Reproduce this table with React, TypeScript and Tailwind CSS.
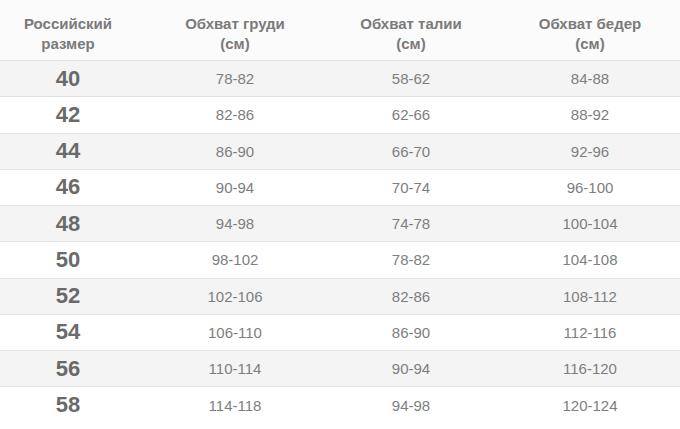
const headers = [
  ["Российский", "размер"],
  ["Обхват груди", "(см)"],
  ["Обхват талии", "(см)"],
  ["Обхват бедер", "(см)"],
];

const rows = [
  ["40", "78-82", "58-62", "84-88"],
  ["42", "82-86", "62-66", "88-92"],
  ["44", "86-90", "66-70", "92-96"],
  ["46", "90-94", "70-74", "96-100"],
  ["48", "94-98", "74-78", "100-104"],
  ["50", "98-102", "78-82", "104-108"],
  ["52", "102-106", "82-86", "108-112"],
  ["54", "106-110", "86-90", "112-116"],
  ["56", "110-114", "90-94", "116-120"],
  ["58", "114-118", "94-98", "120-124"],
];

export default function App() {
  return (
    <div className="w-[680px] h-[429px] overflow-hidden bg-white font-['Liberation_Sans',Arial,sans-serif]">
      <div className="w-[692px]">
        <div className="grid grid-cols-[136px_198px_154px_204px] h-[61px] bg-[#fbfbfb] border-b border-[#e2e2e2] pt-[14px]">
          {headers.map((h, i) => (
            <div
              key={i}
              className="text-center text-[15px] leading-[20px] font-bold text-[#7a7a7a]"
            >
              <div>{h[0]}</div>
              <div>{h[1]}</div>
            </div>
          ))}
        </div>

        {rows.map((r, i) => (
          <div
            key={r[0]}
            className={`grid grid-cols-[136px_198px_154px_204px] h-[36.25px] items-center ${
              i < rows.length - 1 ? "border-b border-[#e2e2e2] shadow-[0_1px_0_#ffffff]" : ""
            } ${i % 2 === 0 ? "bg-[#f4f4f4]" : "bg-white"}`}
          >
            <div className="text-center text-[22px] font-bold text-[#6a6a6a] leading-none">
              {r[0]}
            </div>
            <div className="text-center text-[15px] text-[#7e7e7e] leading-none">
              {r[1]}
            </div>
            <div className="text-center text-[15px] text-[#7e7e7e] leading-none">
              {r[2]}
            </div>
            <div className="text-center text-[15px] text-[#7e7e7e] leading-none">
              {r[3]}
            </div>
          </div>
        ))}
      </div>
    </div>
  );
}
